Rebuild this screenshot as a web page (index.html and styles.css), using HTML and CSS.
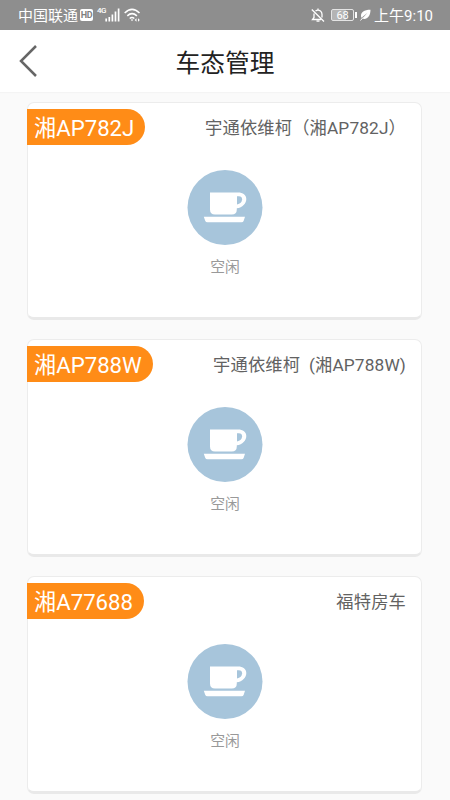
FILE: index.html
```html
<!DOCTYPE html>
<html lang="zh-CN">
<head>
<meta charset="utf-8">
<meta name="viewport" content="width=device-width, initial-scale=1">
<title>车态管理</title>
<link rel="stylesheet" href="styles.css">
</head>
<body>
<svg class="defs" aria-hidden="true">
  <symbol id="cup" viewBox="0 0 75 75">
    <circle cx="37.5" cy="37.5" r="37.500" fill="#a7c5db"/>
    <path fill="#fff" d="M22.500 22.500H50.500C55.500 22.500 58.800 25 58.800 29C58.800 33.500 55 37.600 49.300 38.300V39.500Q49.300 44.500 44.300 44.500H27.500Q22.500 44.500 22.500 39.500Z"/>
    <path fill="#a7c5db" d="M49.500 26.300H51.300Q54.600 26.300 54.600 29.300C54.600 32.200 52.500 34 49.500 34.400Z"/>
    <path fill="#fff" d="M16.300 46.700H57.500L56.200 50.800Q55.700 52.300 54 52.300H20Q18.200 52.300 17.700 50.800Z"/>
  </symbol>
</svg>
<div class="status">
  <div class="status-left">
    <span class="carrier">中国联通</span>
    <span class="hd">HD</span>
    <span class="net">4G</span>
    <svg class="signal" width="15" height="14" viewBox="0 0 15 14"><path d="M1.200 13.500V10.500M4.300 13.500V9M7.400 13.500V6.500M10.500 13.500V3.500M13.600 13.500V.5" stroke="#fff" stroke-width="1.700"/></svg>
    <svg class="wifi" width="17" height="14" viewBox="0 0 17 14" fill="none" stroke="#fff" stroke-width="1.500"><path d="M.7 5Q8 -2.200 15.500 5M3.300 7.900Q8 3.400 12.900 7.900M5.700 10.500Q8 8.500 10.300 10.500"/><path d="M6.700 11.500H9.300L8 13.300Z" fill="#fff" stroke="none"/><path d="M12.500 10.300L10.700 12L12.500 13.700ZM14 10.300L15.800 12L14 13.700Z" fill="#fff" stroke="none"/></svg>
  </div>
  <div class="status-right">
    <svg class="mute" width="14" height="15" viewBox="0 0 14 15" fill="none" stroke="#fff" stroke-width="1.300"><path d="M4.500 3Q7 1.200 9.500 3Q11 4.200 11 6.300V9.500M10 11.500H1.500L3 9.500V5.500M7 .5V2M5.500 13.200H8.500M.8 1.500L13 13.500"/></svg>
    <div class="battery"><span>68</span></div>
    <i class="nub"></i>
    <svg class="leaf" width="11" height="12" viewBox="0 0 11 12"><path d="M10.500 .8C4 .8 .8 3.500 1 7.200C1.200 8.200 1.500 8.700 1.500 8.700L7.500 3.800L2.300 9.500C6.500 11 10.500 8 10.500 .8Z" fill="#fff"/><path d="M.5 11.500L3 8.500" stroke="#fff"/></svg>
    <span class="time">上午9:10</span>
  </div>
</div>
<header class="header">
  <svg class="back" width="20" height="34" viewBox="0 0 20 34"><path d="M17 2L2 17L17 32" fill="none" stroke="#666" stroke-width="2.500"/></svg>
  <h1>车态管理</h1>
</header>
<main class="list">
  <section class="card">
    <div class="card-top"><span class="plate">湘AP782J</span><span class="name">宇通依维柯（湘AP782J）</span></div>
    <svg class="state-icon"><use href="#cup"/></svg>
    <p class="state">空闲</p>
  </section>
  <section class="card">
    <div class="card-top"><span class="plate">湘AP788W</span><span class="name">宇通依维柯  (湘AP788W)</span></div>
    <svg class="state-icon"><use href="#cup"/></svg>
    <p class="state">空闲</p>
  </section>
  <section class="card">
    <div class="card-top"><span class="plate">湘A77688</span><span class="name">福特房车</span></div>
    <svg class="state-icon"><use href="#cup"/></svg>
    <p class="state">空闲</p>
  </section>
</main>
</body>
</html>
```
FILE: styles.css
```css
* {
  box-sizing: border-box;
}

body {
  margin: 0;
  height: 800px;
  overflow: hidden;
  background: #fafafa;
  font-family: Roboto, "Noto Sans CJK SC", sans-serif;
}

.defs {
  display: none;
}

.status {
  display: flex;
  justify-content: space-between;
  height: 30px;
  padding: 0 17px 0 18px;
  background: #8e8e8e;
  color: #fff;
}

.status-left,
.status-right {
  display: flex;
  align-items: center;
}

.carrier {
  padding-top: 2px;
  font-size: 15px;
  line-height: 30px;
}

.hd {
  width: 13px;
  height: 12px;
  margin-left: 2px;
  border-radius: 2px;
  background: #fff;
  color: #808080;
  font-size: 9px;
  font-weight: 700;
  line-height: 12px;
  letter-spacing: -0.4px;
  text-align: center;
}

.net {
  margin: -8px 0 0 4px;
  font-size: 8px;
  font-weight: 500;
  line-height: 8px;
  letter-spacing: -0.6px;
}

.signal {
  margin-left: -1px;
}

.wifi {
  margin-left: 4px;
}

.mute {
  margin-right: 1px;
}

.battery {
  width: 23px;
  height: 12px;
  margin-left: 5px;
  border: 1px solid #e4e4e4;
  border-radius: 2px;
  background: linear-gradient(90deg, #b4b4b4 68%, #8e8e8e 68%);
  font-size: 11px;
  line-height: 11px;
  text-align: center;
}

.battery span {
  display: block;
}

.nub {
  width: 2px;
  height: 6px;
  margin-left: 1px;
  background: #fff;
}

.leaf {
  margin-left: 3px;
}

.time {
  padding-top: 1px;
  margin-left: 3px;
  font-size: 15px;
  line-height: 30px;
  white-space: nowrap;
}

.header {
  display: grid;
  grid-template-columns: 60px 1fr 60px;
  align-items: center;
  height: 62px;
  background: #fff;
  box-shadow: 0 1px 1px #f4f4f4;
}

.back {
  margin-left: 19px;
}

.header h1 {
  margin: 5px 0 0;
  color: #222;
  font-size: 24.7px;
  font-weight: 400;
  line-height: 36px;
  text-align: center;
}

.list {
  display: flex;
  flex-direction: column;
  gap: 19px;
  padding: 10px 28px 0 27px;
}

.card {
  display: flex;
  flex-direction: column;
  flex: none;
  align-items: center;
  height: 218px;
  padding-top: 6px;
  border: 1px solid #ececec;
  border-bottom: 3px solid #e9e9e9;
  border-radius: 7px;
  background: #fff;
}

.card-top {
  display: flex;
  justify-content: space-between;
  align-self: stretch;
  height: 36px;
  padding-right: 15px;
}

.plate {
  padding: 0 11px 0 7px;
  margin-left: -1px;
  border-radius: 0 18px 18px 0;
  background: #ff8c17;
  color: #fff;
  font-size: 22.2px;
  line-height: 38px;
}

.name {
  color: #626262;
  font-size: 17.3px;
  line-height: 38px;
  letter-spacing: 0.13px;
  white-space: pre;
}

.state-icon {
  width: 76px;
  height: 75px;
  margin-top: 25px;
}

.state {
  margin: 11px 0 0 1px;
  color: #999;
  font-size: 14.8px;
  line-height: 22px;
}
```
